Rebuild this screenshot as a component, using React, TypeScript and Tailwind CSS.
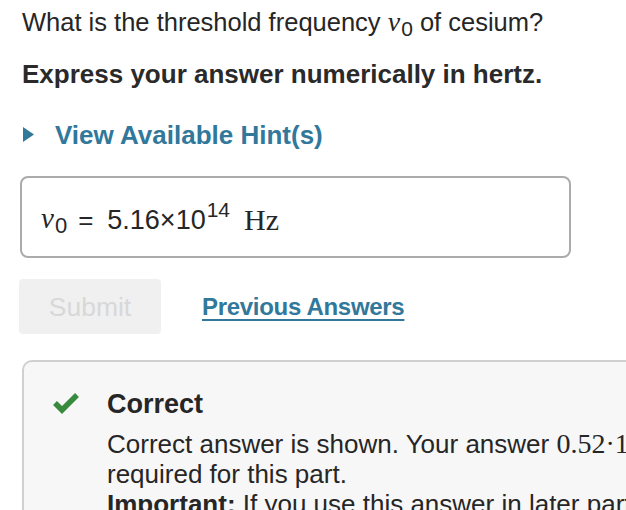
import React from "react";

const Nu0 = ({ big = 28, sub = 21 }: { big?: number; sub?: number }) => (
  <span className="whitespace-nowrap">
    <span className="font-['Liberation_Serif',serif] italic" style={{ fontSize: big }}>ν</span>
    <span className="relative top-[5px] ml-[1px]" style={{ fontSize: sub }}>0</span>
  </span>
);

export default function App() {
  return (
    <div className="w-[626px] h-[510px] overflow-hidden bg-white font-['Liberation_Sans',Arial,sans-serif] text-[26px] leading-[30px] text-[#262626]">
      <div className="pl-[20px] pt-[7px]">
        <p className="pl-[2px] text-[25.5px]">
          What is the threshold frequency <Nu0 /> of cesium?
        </p>
        <p className="pl-[2px] mt-[20px] font-bold text-[#2a2a2a] text-[26px]">Express your answer numerically in hertz.</p>

        <div className="mt-[31px] flex items-center text-[#31789b] font-bold">
          <svg width="14" height="16" viewBox="0 0 14 16" className="ml-[3px]">
            <polygon points="0,0 11,7.5 0,15" fill="#31789b" />
          </svg>
          <span className="ml-[18px] text-[26px]">View Available Hint(s)</span>
        </div>

        <div className="mt-[26px] w-[551px] h-[82px] border-2 border-[#ababab] rounded-[8px] flex items-center pl-[19px] pt-[5px]">
          <Nu0 big={29} sub={22} />
          <span className="ml-[11px]">=</span>
          <span className="ml-[14px] text-[27px]">5.16×10</span>
          <span className="relative top-[-10px] text-[21px] ml-[1px]">14</span>
          <span className="ml-[14px] font-['Liberation_Serif',serif] text-[30px]">Hz</span>
        </div>

        <div className="mt-[21px] flex items-center">
          <div className="w-[142px] h-[55px] -ml-[1px] bg-[#f0f0f0] rounded-[4px] flex items-center justify-center text-[#d8d8d8] text-[26.5px] pt-[1px]">
            Submit
          </div>
          <span className="ml-[41px] mt-[1px] font-bold text-[24px] tracking-[-0.3px] text-[#31789b] underline underline-offset-[4px] decoration-2">
            Previous Answers
          </span>
        </div>

        <div className="mt-[26px] ml-[2px] w-[900px] h-[200px] bg-[#f7f7f7] border-2 border-[#d0d0d0] rounded-[10px] flex pt-[27px]">
          <svg width="30" height="24" viewBox="0 0 30 24" className="ml-[27px] mt-[2px] shrink-0">
            <polyline points="4,12 11,19 26,4" fill="none" stroke="#388a3d" strokeWidth="5.5" strokeLinecap="butt" strokeLinejoin="miter" />
          </svg>
          <div className="ml-[26px] whitespace-nowrap">
            <div className="font-bold text-[27px] leading-[30px] mb-[10px]">Correct</div>
            <div>
              Correct answer is shown. Your answer{" "}
              <span className="font-['Liberation_Serif',serif] text-[28px]">0.52·10</span> Hz was either rounded differently than required
            </div>
            <div>required for this part.</div>
            <div>
              <span className="font-bold">Important:</span> If you use this answer in later parts, use the full unrounded value in your calculations.
            </div>
          </div>
        </div>
      </div>
    </div>
  );
}
